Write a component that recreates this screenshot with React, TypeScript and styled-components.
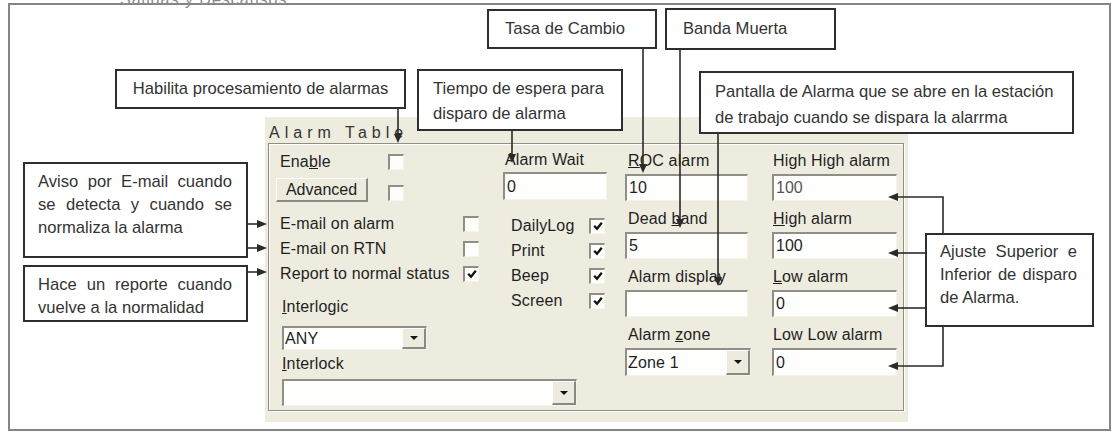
import React from 'react'
import styled, { createGlobalStyle } from 'styled-components'

const GlobalStyle = createGlobalStyle`
  html, body {
    margin: 0;
    padding: 0;
    background: #ffffff;
  }
  body {
    font-family: "Liberation Sans", Arial, sans-serif;
  }
`

// --- figure frame ---
const Page = styled.div`
  position: relative;
  width: 1116px;
  height: 433px;
  overflow: hidden;
  box-sizing: border-box;
  padding: 3px 0 0 8px;
`

const PageRemnant = styled.div`
  position: absolute;
  left: 120px;
  top: -9px;
  font-size: 16px;
  letter-spacing: 1px;
  color: #8a8a8a;
`

const Frame = styled.div`
  width: 1103px;
  height: 428px;
  box-sizing: border-box;
  border: 2px solid #858585;
  padding: 112px 0 0 255px;
`

// --- dialog ---
const Panel = styled.div`
  width: 643px;
  height: 305px;
  box-sizing: border-box;
  background: #eeecdf;
  padding: 0 4px 11px 3px;
  display: flex;
  flex-direction: column;
  color: #1f1f1f;
  font-size: 16px;
  letter-spacing: 0.15px;
`

const PanelTitle = styled.div`
  height: 26px;
  box-sizing: border-box;
  padding: 6px 0 0 1px;
  line-height: 20px;
  letter-spacing: 5px;
  color: #333;
`

const GroupBox = styled.div`
  flex: 1;
  display: flex;
  align-items: flex-start;
  box-sizing: border-box;
  border: 1px solid #8e8e86;
  box-shadow: inset 1px 1px 0 #ffffff, 1px 1px 0 #ffffff;
  padding: 6px 0 0 7px;
`

const LeftBlock = styled.div`
  width: 331px;
  display: flex;
  flex-direction: column;
`

const LeftTop = styled.div`
  display: flex;
  align-items: flex-start;
`

const OptionColumn = styled.div`
  width: 227px;
  display: flex;
  flex-direction: column;
`

const OutputColumn = styled.div`
  width: 104px;
  display: flex;
  flex-direction: column;
`

const CheckRow = styled.div<{ $labelWidth: number; $indent: number; $top?: number; $height?: number }>`
  display: flex;
  align-items: center;
  height: ${({ $height }) => $height ?? 25}px;
  margin-top: ${({ $top }) => $top ?? 0}px;
  & > span:first-child {
    width: ${({ $labelWidth }) => $labelWidth}px;
    padding-left: ${({ $indent }) => $indent}px;
    box-sizing: border-box;
    white-space: nowrap;
  }
`

const RowLabel = styled.span`
  line-height: 22px;
`

const PushButton = styled.button`
  width: 92px;
  height: 24px;
  margin: 0 20px 0 0;
  padding: 0;
  box-sizing: border-box;
  font: 16px "Liberation Sans", Arial, sans-serif;
  color: #1f1f1f;
  background: #ecebdd;
  border-top: 1px solid #ffffff;
  border-left: 1px solid #ffffff;
  border-right: 2px solid #8a8a82;
  border-bottom: 2px solid #8a8a82;
`

const ButtonRow = styled.div`
  display: flex;
  align-items: flex-start;
  margin-top: 3px;
  height: 26px;
  padding-top: 1px;
  box-sizing: border-box;
  & > span {
    margin-top: 7px;
  }
`

const Check = styled.span`
  flex: none;
  width: 16px;
  height: 16px;
  box-sizing: border-box;
  background: #fdfdfb;
  border-top: 2px solid #8f8f87;
  border-left: 2px solid #8f8f87;
  border-right: 1px solid #f6f5ec;
  border-bottom: 1px solid #f6f5ec;
  display: inline-flex;
  align-items: center;
  justify-content: center;
`

const SectionLabel = styled.div<{ $top: number; $indent: number }>`
  height: 22px;
  line-height: 22px;
  margin-top: ${({ $top }) => $top}px;
  padding-left: ${({ $indent }) => $indent}px;
`

const Combo = styled.div<{ $w: number; $h: number; $top?: number; $indent?: number }>`
  display: flex;
  width: ${({ $w }) => $w}px;
  height: ${({ $h }) => $h}px;
  margin-top: ${({ $top }) => $top ?? 0}px;
  margin-left: ${({ $indent }) => $indent ?? 0}px;
  box-sizing: border-box;
  background: #fefefc;
  border-top: 2px solid #8f8f87;
  border-left: 2px solid #8f8f87;
  border-right: 1px solid #f4f3ea;
  border-bottom: 1px solid #f4f3ea;
`

const ComboText = styled.span<{ $lh?: number }>`
  flex: 1;
  padding-left: 1px;
  line-height: ${({ $lh }) => $lh ?? 22}px;
`

const DropButton = styled.span`
  width: 24px;
  box-sizing: border-box;
  background: #ecebdd;
  border-top: 1px solid #ffffff;
  border-left: 1px solid #ffffff;
  border-right: 2px solid #8a8a82;
  border-bottom: 2px solid #8a8a82;
  display: flex;
  align-items: center;
  justify-content: center;
  &::after {
    content: '';
    border-left: 4px solid transparent;
    border-right: 4px solid transparent;
    border-top: 4px solid #111;
  }
`

const FieldColumn = styled.div<{ $gap: number; $w: number; $indent: number }>`
  width: ${({ $w }) => $w}px;
  margin-left: ${({ $gap }) => $gap}px;
  display: flex;
  flex-direction: column;
  gap: 7px;
  & > div > label {
    padding-left: ${({ $indent }) => $indent}px;
  }
`

const FieldGroup = styled.div`
  display: flex;
  flex-direction: column;
  gap: 2px;
`

const FieldLabel = styled.label<{ $h?: number; $indent?: number }>`
  display: block;
  height: ${({ $h }) => $h ?? 22}px;
  line-height: ${({ $h }) => $h ?? 22}px;
  padding-left: ${({ $indent }) => $indent ?? 0}px;
  white-space: nowrap;
`

const TextField = styled.input<{ $w: number; $h?: number; $muted?: boolean }>`
  display: block;
  width: ${({ $w }) => $w}px;
  height: ${({ $h }) => $h ?? 27}px;
  box-sizing: border-box;
  margin: 0;
  padding: 0 0 0 2px;
  font: 16px "Liberation Sans", Arial, sans-serif;
  color: ${({ $muted }) => ($muted ? '#555' : '#1f1f1f')};
  background: #fefefc;
  border: none;
  border-top: 2px solid #8f8f87;
  border-left: 2px solid #8f8f87;
  border-right: 1px solid #f4f3ea;
  border-bottom: 1px solid #f4f3ea;
  outline: none;
`

// --- annotation callouts ---
const Callout = styled.div<{ $x: number; $y: number; $w: number; $h: number; $pad: string; $lh: number; $center?: boolean }>`
  position: absolute;
  left: ${({ $x }) => $x}px;
  top: ${({ $y }) => $y}px;
  width: ${({ $w }) => $w}px;
  height: ${({ $h }) => $h}px;
  box-sizing: border-box;
  border: 2px solid #2e2e2e;
  background: #ffffff;
  padding: ${({ $pad }) => $pad};
  font-size: 16.6px;
  line-height: ${({ $lh }) => $lh}px;
  color: #333;
  text-align: ${({ $center }) => ($center ? 'center' : 'left')};
  white-space: nowrap;
`

const Line = styled.span<{ $justify?: boolean }>`
  display: block;
  text-align: ${({ $justify }) => ($justify ? 'justify' : 'left')};
  text-align-last: ${({ $justify }) => ($justify ? 'justify' : 'left')};
`

const LeaderLayer = styled.svg`
  position: absolute;
  left: 0;
  top: 0;
  pointer-events: none;
`

function CheckBox({ checked }: { checked?: boolean }) {
  return (
    <Check>
      {checked && (
        <svg width="10" height="10" viewBox="0 0 10 10">
          <path d="M1.2 4.8 L4 7.8 L8.8 1.8" fill="none" stroke="#111" strokeWidth="2.3" />
        </svg>
      )}
    </Check>
  )
}

function Leaders() {
  const stroke = '#2a2a2a'
  const down = (x: number, from: number, tip: number) => (
    <g key={`d${x}`}>
      <line x1={x} y1={from} x2={x} y2={tip - 6} stroke={stroke} strokeWidth={1.6} />
      <polygon points={`${x - 4},${tip - 9} ${x + 4},${tip - 9} ${x},${tip}`} fill={stroke} />
    </g>
  )
  const right = (y: number, from: number, tip: number) => (
    <g key={`r${y}`}>
      <line x1={from} y1={y} x2={tip - 6} y2={y} stroke={stroke} strokeWidth={1.6} />
      <polygon points={`${tip - 10},${y - 4} ${tip - 10},${y + 4} ${tip},${y}`} fill={stroke} />
    </g>
  )
  const left = (pts: string, y: number, tip: number) => (
    <g key={`l${y}`}>
      <polyline points={pts} fill="none" stroke={stroke} strokeWidth={1.6} />
      <polygon points={`${tip + 10},${y - 4} ${tip + 10},${y + 4} ${tip},${y}`} fill={stroke} />
    </g>
  )
  return (
    <LeaderLayer width={1116} height={433} viewBox="0 0 1116 433">
      {down(398, 109, 143)}
      {down(512, 131, 163)}
      {down(643, 49, 173)}
      {down(680, 50, 228)}
      {down(718, 134, 286)}
      {right(224, 248, 267)}
      {right(248, 248, 267)}
      {right(272, 248, 267)}
      {left('943,233 943,197 894,197', 197, 888)}
      {left('925,253 894,253', 253, 888)}
      {left('925,308 894,308', 308, 888)}
      {left('943,327 943,366 894,366', 366, 888)}
    </LeaderLayer>
  )
}

export default function App() {
  return (
    <Page>
      <GlobalStyle />
      <PageRemnant>Salidas y Descansos.</PageRemnant>
      <Frame>
        <Panel>
          <PanelTitle>Alarm Table</PanelTitle>
          <GroupBox>
            <LeftBlock>
              <LeftTop>
                <OptionColumn>
                  <CheckRow $labelWidth={112} $indent={4} $height={24}>
                    <RowLabel>
                      Ena<u>b</u>le
                    </RowLabel>
                    <CheckBox />
                  </CheckRow>
                  <ButtonRow>
                    <PushButton>Advanced</PushButton>
                    <CheckBox />
                  </ButtonRow>
                  <CheckRow $labelWidth={187} $indent={4} $top={8}>
                    <RowLabel>E-mail on alarm</RowLabel>
                    <CheckBox />
                  </CheckRow>
                  <CheckRow $labelWidth={187} $indent={4}>
                    <RowLabel>E-mail on RTN</RowLabel>
                    <CheckBox />
                  </CheckRow>
                  <CheckRow $labelWidth={187} $indent={4}>
                    <RowLabel>Report to normal status</RowLabel>
                    <CheckBox checked />
                  </CheckRow>
                  <SectionLabel $top={10} $indent={6}>
                    <u>I</u>nterlogic
                  </SectionLabel>
                  <Combo $w={145} $h={24} $top={8} $indent={6}>
                    <ComboText>ANY</ComboText>
                    <DropButton />
                  </Combo>
                </OptionColumn>
                <OutputColumn>
                  <FieldGroup>
                    <FieldLabel $h={20} $indent={2}>
                      Alarm Wait
                    </FieldLabel>
                    <TextField $w={104} $h={28} readOnly value="0" />
                  </FieldGroup>
                  <CheckRow $labelWidth={86} $indent={8} $top={13}>
                    <RowLabel>DailyLog</RowLabel>
                    <CheckBox checked />
                  </CheckRow>
                  <CheckRow $labelWidth={86} $indent={8}>
                    <RowLabel>Print</RowLabel>
                    <CheckBox checked />
                  </CheckRow>
                  <CheckRow $labelWidth={86} $indent={8}>
                    <RowLabel>Beep</RowLabel>
                    <CheckBox checked />
                  </CheckRow>
                  <CheckRow $labelWidth={86} $indent={8}>
                    <RowLabel>Screen</RowLabel>
                    <CheckBox checked />
                  </CheckRow>
                </OutputColumn>
              </LeftTop>
              <SectionLabel $top={3} $indent={6}>
                <u>I</u>nterlock
              </SectionLabel>
              <Combo $w={295} $h={27} $top={4} $indent={6}>
                <ComboText />
                <DropButton />
              </Combo>
            </LeftBlock>

            <FieldColumn $gap={18} $w={126} $indent={3}>
              <FieldGroup>
                <FieldLabel>
                  <u>R</u>OC alarm
                </FieldLabel>
                <TextField $w={123} readOnly value="10" />
              </FieldGroup>
              <FieldGroup>
                <FieldLabel>
                  Dead <u>b</u>and
                </FieldLabel>
                <TextField $w={123} readOnly value="5" />
              </FieldGroup>
              <FieldGroup>
                <FieldLabel>Alarm display</FieldLabel>
                <TextField $w={123} readOnly value="" />
              </FieldGroup>
              <FieldGroup>
                <FieldLabel>
                  Alarm <u>z</u>one
                </FieldLabel>
                <Combo $w={126} $h={28}>
                  <ComboText $lh={26}>Zone 1</ComboText>
                  <DropButton />
                </Combo>
              </FieldGroup>
            </FieldColumn>

            <FieldColumn $gap={21} $w={125} $indent={1}>
              <FieldGroup>
                <FieldLabel>High High alarm</FieldLabel>
                <TextField $w={125} $muted readOnly value="100" />
              </FieldGroup>
              <FieldGroup>
                <FieldLabel>
                  <u>H</u>igh alarm
                </FieldLabel>
                <TextField $w={125} readOnly value="100" />
              </FieldGroup>
              <FieldGroup>
                <FieldLabel>
                  <u>L</u>ow alarm
                </FieldLabel>
                <TextField $w={125} readOnly value="0" />
              </FieldGroup>
              <FieldGroup>
                <FieldLabel>Low Low alarm</FieldLabel>
                <TextField $w={125} $h={28} readOnly value="0" />
              </FieldGroup>
            </FieldColumn>
          </GroupBox>
        </Panel>
      </Frame>

      <Callout $x={487} $y={9} $w={170} $h={40} $pad="0 0 0 16px" $lh={36}>
        Tasa de Cambio
      </Callout>
      <Callout $x={665} $y={8} $w={171} $h={42} $pad="0 0 0 16px" $lh={38}>
        Banda Muerta
      </Callout>
      <Callout $x={115} $y={69} $w={291} $h={40} $pad="0" $lh={36} $center>
        Habilita procesamiento de alarmas
      </Callout>
      <Callout $x={417} $y={69} $w={206} $h={62} $pad="5px 0 0 14px" $lh={25}>
        <Line>Tiempo de espera para</Line>
        <Line>disparo de alarma</Line>
      </Callout>
      <Callout $x={699} $y={71} $w={375} $h={63} $pad="6px 0 0 14px" $lh={26}>
        <Line>Pantalla de Alarma que se abre en la estación</Line>
        <Line>de trabajo cuando se dispara la alarrma</Line>
      </Callout>
      <Callout $x={23} $y={162} $w={225} $h={96} $pad="6px 14px 0 13px" $lh={23}>
        <Line $justify>Aviso por E-mail cuando</Line>
        <Line $justify>se detecta y cuando se</Line>
        <Line>normaliza la alarma</Line>
      </Callout>
      <Callout $x={23} $y={265} $w={225} $h={57} $pad="6px 14px 0 13px" $lh={23}>
        <Line $justify>Hace un reporte cuando</Line>
        <Line>vuelve a la normalidad</Line>
      </Callout>
      <Callout $x={925} $y={233} $w={169} $h={94} $pad="5px 15px 0 13px" $lh={23}>
        <Line $justify>Ajuste Superior e</Line>
        <Line $justify>Inferior de disparo</Line>
        <Line>de Alarma.</Line>
      </Callout>

      <Leaders />
    </Page>
  )
}
